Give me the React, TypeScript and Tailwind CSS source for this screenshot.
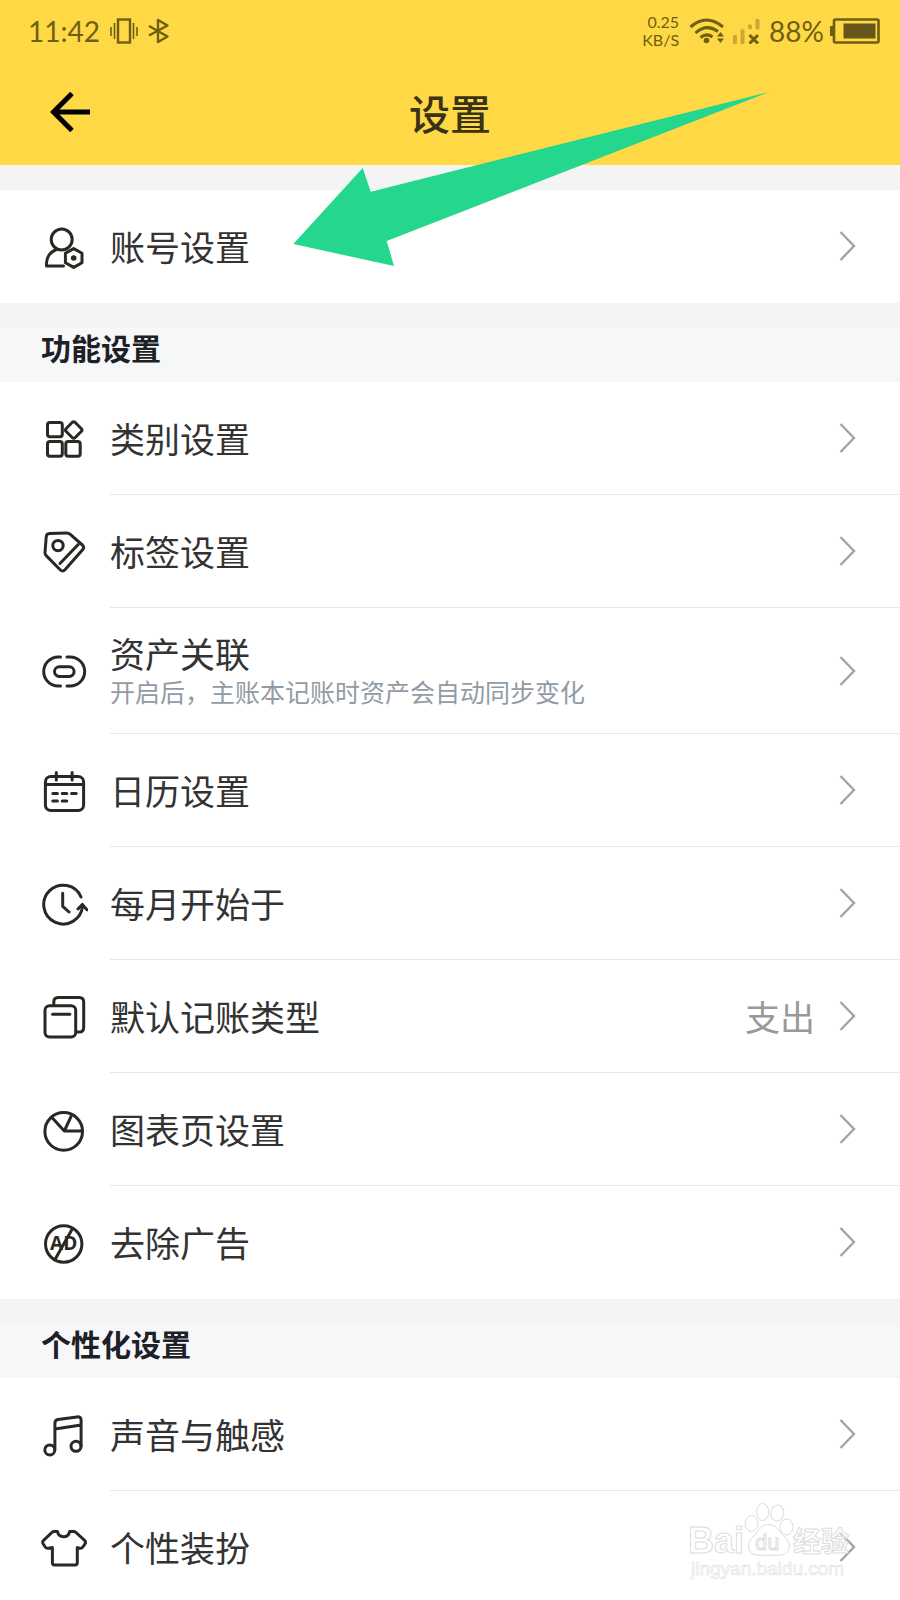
import type { ReactNode } from 'react'

type SettingItem = {
  title: string
  icon: ReactNode
  description?: string
  value?: string
}

const ACCOUNT_ITEMS: SettingItem[] = [
  {
    title: '账号设置',
    icon: (
      <>
        <circle cx="21.7" cy="16.5" r="10.5" />
        <path d="M23.5 43H6.5V40C7 33 11 28.5 16.5 26.5" />
        <path d="M33.7 25.6 42 30.3V39.7L33.7 44.4 25.4 39.7V30.3Z" />
        <circle cx="33.7" cy="35" r="2.8" fill="currentColor" stroke="none" />
      </>
    ),
  },
]

const FEATURE_ITEMS: SettingItem[] = [
  {
    title: '类别设置',
    icon: (
      <>
        <rect x="7.5" y="7.4" width="14.8" height="14.4" rx="2.5" />
        <rect x="7.5" y="26.6" width="14.8" height="14.6" rx="2.5" />
        <rect x="25.8" y="26.6" width="14.4" height="14.6" rx="2.5" />
        <rect x="27.3" y="8.6" width="12.8" height="12.8" rx="2.2" transform="rotate(45 33.7 15)" />
      </>
    ),
  },
  {
    title: '标签设置',
    icon: (
      <>
        <path d="M9.5 5.6 26.5 5Q28.5 4.9 30 6.2L42.4 17Q44.6 19.2 42.8 21.5L25.2 41.6Q22.8 44.2 20.4 42L6.2 27.6Q4.9 26.2 5 24.6L6.2 9Q6.5 5.800 9.5 5.600Z" />
        <circle cx="18" cy="17.6" r="5.2" />
        <path d="M38.200 16.500 20 35.500" />
      </>
    ),
  },
  {
    title: '资产关联',
    description: '开启后，主账本记账时资产会自动同步变化',
    icon: (
      <>
        <path d="M20.5 10H18.2A14.4 14.4 0 0 0 18.2 39H20.5" />
        <path d="M27 10H30.2A14.4 14.4 0 0 1 30.2 39H27" />
        <rect x="14.5" y="19.8" width="19.6" height="9.6" rx="4.8" />
      </>
    ),
  },
  {
    title: '日历设置',
    icon: (
      <>
        <rect x="5.4" y="9.4" width="38.2" height="34.2" rx="5.5" />
        <path d="M5.4 17.4H43.6M16.3 5.4V13M32.1 5.4V13" />
        <path d="M12.8 26.4H17.4M22.2 26.4H26.8M31.6 26.4H36.2M12.8 34.1H17.4M22.2 34.1H26.8" />
      </>
    ),
  },
  {
    title: '每月开始于',
    icon: (
      <>
        <path d="M41 17A19.4 19.4 0 1 0 42.5 26" />
        <path d="M38 29 42.3 24.4 47 29.800M22.7 13.2V26.3L29 32" />
      </>
    ),
  },
  {
    title: '默认记账类型',
    value: '支出',
    icon: (
      <>
        <rect x="5" y="12.7" width="30.7" height="31.3" rx="4.5" />
        <path d="M12.6 21.3H29.8" />
        <path d="M13.8 12V9Q13.8 4.5 18.2 4.5H39.2Q43.7 4.5 43.7 9V34.4Q43.7 39 39.2 39H36.5" />
      </>
    ),
  },
  {
    title: '图表页设置',
    icon: (
      <>
        <circle cx="23.7" cy="25.4" r="18.800" />
        <path d="M42.5 25H24.3L11.5 11M24.3 25 31.8 8.8" />
      </>
    ),
  },
  {
    title: '去除广告',
    icon: (
      <>
        <circle cx="23.7" cy="25" r="18.2" />
        <path d="M32.5 9.6 15 40.6" />
        <text
          x="23.7"
          y="31.2"
          textAnchor="middle"
          fontSize="19"
          fontWeight="700"
          fill="currentColor"
          stroke="none"
          fontFamily="Open Sans, sans-serif"
        >
          AD
        </text>
      </>
    ),
  },
]

const PERSONAL_ITEMS: SettingItem[] = [
  {
    title: '声音与触感',
    icon: (
      <>
        <circle cx="9.8" cy="38.9" r="5" />
        <circle cx="36" cy="35.3" r="5" />
        <path d="M14.9 38.5V12.2Q14.9 9 18 8.5L37 5.9Q41.1 5.4 41.1 9.2V35M14.9 18 41.1 13.9" />
      </>
    ),
  },
  {
    title: '个性装扮',
    icon: (
      <path d="M14.2 7.6H17.5Q18.4 12.7 23.5 12.7T29.6 7.6H33.6Q35 7.6 36 8.5L44.6 16.4Q46.2 18 45 19.8L42.8 23Q41.6 24.8 39.6 24.2L37.3 23.6V38.8Q37.3 40.9 35.2 40.9H14.6Q12.4 40.9 12.4 38.8V23.6L8.6 24.2Q6.4 24.7 5.2 23L3.1 19.8Q2 18 3.6 16.4L11.8 8.5Q12.8 7.6 14.2 7.6Z" />
    ),
  },
]

function StatusBar() {
  return (
    <div className="flex h-[62px] items-center justify-between pl-7 pr-5 font-['Lato',sans-serif] text-[28px] leading-8 text-[#6f5f13]">
      <div className="flex items-center">
        <span>11:42</span>
        <svg width="28" height="26" viewBox="0 0 28 26" fill="none" stroke="currentColor" className="ml-2.5">
          <rect x="8" y="1.5" width="12" height="23" strokeWidth="2.4" />
          <path d="M1 9V18M4.5 5V21M23.5 5V21M27 9V18" strokeWidth="1.6" />
        </svg>
        <svg width="22" height="26" viewBox="0 0 22 26" fill="none" stroke="currentColor" strokeWidth="2.4" strokeLinejoin="round" className="ml-2.5">
          <path d="M1 8 19.5 18.5 10 24V2L19.5 7.5 1 17.5" />
        </svg>
      </div>
      <div className="flex items-center">
        <div className="text-right text-base leading-[18px]">
          <div>0.25</div>
          <div>KB/S</div>
        </div>
        <svg width="36" height="26" viewBox="0 0 36 26" fill="none" stroke="currentColor" strokeWidth="3" className="ml-2.5">
          <path d="M1.5 9Q17.5-5 34 9M6.5 15Q17.5 5 29 13.5M11.5 19.5Q17.5 14.5 23.5 19" />
          <circle cx="17.5" cy="22.5" r="2.8" fill="currentColor" stroke="none" />
          <path d="M28 18.5 31.5 14 35 18.5ZM28 20.5H35L31.5 25Z" fill="currentColor" stroke="none" />
        </svg>
        <svg width="28" height="26" viewBox="0 0 28 26" className="ml-2">
          <g fill="#cba733">
            <rect y="17" width="4" height="9" rx="1" />
            <rect x="7.5" y="11.5" width="4" height="14.5" rx="1" />
            <rect x="15" y="6.5" width="4" height="4.5" rx="1" />
            <rect x="22.5" y="1" width="4" height="10.5" rx="1" />
          </g>
          <path d="M16.5 17 25 25.5M25 17 16.5 25.5" stroke="currentColor" strokeWidth="3" />
        </svg>
        <span className="ml-2">88%</span>
        <svg width="50" height="26" viewBox="0 0 50 26" className="ml-1.5">
          <rect x="4" y="1.5" width="44.5" height="23" rx="1.5" fill="none" stroke="currentColor" strokeWidth="2.6" />
          <rect y="8" width="4" height="10" rx="1" fill="currentColor" />
          <rect x="13.5" y="5.5" width="32" height="15" fill="#65561b" />
        </svg>
      </div>
    </div>
  )
}

function SettingRow({ item }: { item: SettingItem }) {
  return (
    <li className="group">
      <button type="button" className="flex w-full items-stretch bg-white text-left">
        <span className="flex w-[110px] shrink-0 items-center pl-10">
          <svg
            width="48"
            height="48"
            viewBox="0 0 48 48"
            fill="none"
            stroke="currentColor"
            strokeWidth="3"
            strokeLinecap="round"
            strokeLinejoin="round"
            className="text-[#2b2722]"
          >
            {item.icon}
          </svg>
        </span>
        <span
          className={`flex flex-1 items-center border-b border-[#e8e8e8] pr-[44px] group-last:border-transparent ${
            item.description ? 'min-h-[126px]' : 'min-h-[113px]'
          }`}
        >
          <span className="flex flex-1 flex-col">
            <span className="text-[35px] leading-10 text-[#333]">{item.title}</span>
            {item.description ? (
              <span className="text-[25px] leading-9 text-[#919ba5]">{item.description}</span>
            ) : null}
          </span>
          {item.value ? (
            <span className="mr-6 text-[35px] leading-10 text-[#999]">{item.value}</span>
          ) : null}
          <svg width="17" height="32" viewBox="0 0 17 32" fill="none" stroke="#a3a3a3" strokeWidth="2.4">
            <path d="M1.5 2 15 16 1.5 30" />
          </svg>
        </span>
      </button>
    </li>
  )
}

function SettingList({ title, items }: { title?: string; items: SettingItem[] }) {
  return (
    <section className="shrink-0">
      <div className="h-[25px] bg-[#f4f4f4]" />
      {title ? (
        <h2 className="bg-[#f5f7f9] pb-4 pl-[41px] text-[30px] font-bold leading-[38px] text-[#1d2025]">
          {title}
        </h2>
      ) : null}
      <ul>
        {items.map((item) => (
          <SettingRow key={item.title} item={item} />
        ))}
      </ul>
    </section>
  )
}

function PointerArrow() {
  return (
    <svg
      width="500"
      height="240"
      viewBox="0 0 500 240"
      className="pointer-events-none absolute left-[280px] top-[70px]"
    >
      <path d="M13.3 174 82.7 98 90.7 121.7 490 21.7 106.7 171 114 196Z" fill="#25d68d" />
    </svg>
  )
}

function Watermark() {
  return (
    <svg
      width="240"
      height="120"
      viewBox="0 0 240 120"
      fill="#fff"
      fillOpacity="0.7"
      stroke="#dcdcdc"
      className="pointer-events-none absolute bottom-0 right-0"
    >
      <g fontFamily="Liberation Sans, Noto Sans CJK SC, sans-serif" fontWeight="700">
        <text x="28" y="73" fontSize="36">Bai</text>
        <text x="133" y="72" fontSize="28">经验</text>
      </g>
      <ellipse cx="91.5" cy="43.5" rx="6.5" ry="8" />
      <ellipse cx="102.7" cy="32" rx="6" ry="8.5" />
      <ellipse cx="117.3" cy="33" rx="6.5" ry="8" transform="rotate(12 117.3 33)" />
      <ellipse cx="126.5" cy="47" rx="6.5" ry="8" />
      <path d="M108.5 44.5C117 44.5 119 52 124 56.5C129 61 130.5 66 128.5 70.5C126 76 119 75.5 109 75C99 75.5 92 76 89.5 70.5C87.5 66 88.5 61 93.5 56.5C98.5 52 100 44.5 108.500 44.500Z" />
      <text x="95" y="70" fontSize="22" fontFamily="Liberation Sans, sans-serif">du</text>
      <text x="31" y="95" fontSize="19" stroke="#dedede" strokeWidth="0.6" fontFamily="Liberation Sans, sans-serif">
        jingyan.baidu.com
      </text>
    </svg>
  )
}

export default function App() {
  return (
    <div className="relative flex h-screen flex-col overflow-hidden bg-white font-['Noto_Sans_CJK_SC',sans-serif]">
      <header className="shrink-0 bg-[#ffd945]">
        <StatusBar />
        <div className="grid h-[103px] grid-cols-[1fr_auto_1fr] items-start px-[50px] pt-6">
          <button type="button" aria-label="返回" className="flex h-[52px] items-center justify-self-start text-black">
            <svg width="40" height="40" viewBox="0 0 40 40" fill="none" stroke="currentColor" strokeWidth="5">
              <path d="M22 1.5 3.5 20 22 38.5M3.5 20H40" />
            </svg>
          </button>
          <h1 className="text-[41px] font-medium leading-[52px] text-[#3a3216]">设置</h1>
        </div>
      </header>
      <main className="flex min-h-0 flex-1 flex-col">
        <SettingList items={ACCOUNT_ITEMS} />
        <SettingList title="功能设置" items={FEATURE_ITEMS} />
        <SettingList title="个性化设置" items={PERSONAL_ITEMS} />
      </main>
      <PointerArrow />
      <Watermark />
    </div>
  )
}
